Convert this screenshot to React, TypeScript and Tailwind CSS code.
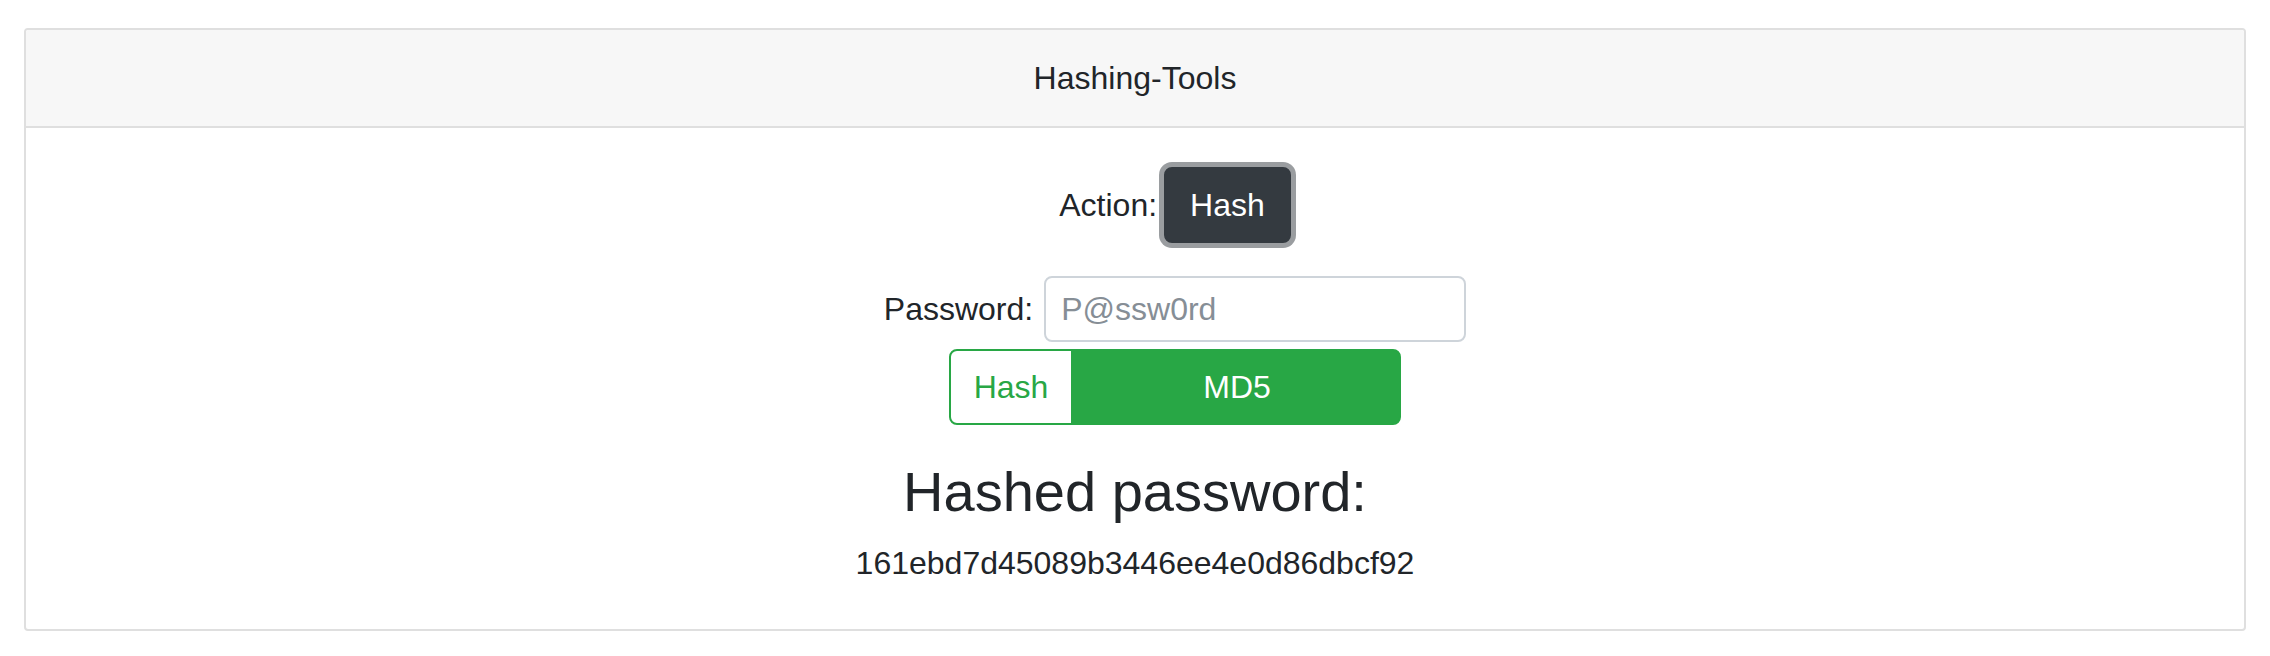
import React from 'react';

const font = { fontFamily: '"Liberation Sans", Arial, sans-serif' };

const ActionRow = () => {
  return (
    <div className="flex items-center gap-[7px]">
      <span>Action:</span>
      <button className="rounded-[8px] border-2 border-[#343a40] bg-[#343a40] px-[24px] py-[12px] leading-[48px] text-white shadow-[0_0_0_5px_#9a9da0]">
        Hash
      </button>
    </div>
  );
};

const PasswordRow = () => {
  return (
    <div className="mt-[33px] flex items-center gap-[11px]">
      <label htmlFor="pw">Password:</label>
      <input
        id="pw"
        type="text"
        placeholder="P@ssw0rd"
        className="h-[66px] w-[422px] rounded-[8px] border-2 border-[#ced4da] bg-white px-[15px] leading-[48px] text-[#495057] outline-none placeholder:text-[#868e96]"
      />
    </div>
  );
};

const HashGroup = () => {
  return (
    <div className="mt-[7px] flex">
      <button className="w-[124px] rounded-l-[8px] border-2 border-[#28a745] bg-white py-[12px] leading-[48px] text-[#28a745]">
        Hash
      </button>
      <button className="w-[328px] rounded-r-[8px] border-2 border-[#28a745] bg-[#28a745] py-[12px] leading-[48px] text-white">
        MD5
      </button>
    </div>
  );
};

export default function App() {
  return (
    <div className="min-h-screen bg-white pt-[28px] text-[32px] leading-[48px] text-[#212529]" style={font}>
      <div className="mx-[24px] overflow-hidden rounded-[4px] border-2 border-[#dfdfdf]">
        <div className="border-b-2 border-[#dfdfdf] bg-[#f7f7f7] px-[40px] py-[24px] text-center">
          Hashing-Tools
        </div>
        <div className="px-[40px] pt-[39px] pb-[42px] text-center">
          {/* controls sit a bit right of centre in the original */}
          <div className="flex flex-col items-center pl-[80px]">
            <ActionRow />
            <PasswordRow />
            <HashGroup />
          </div>
          <h3 className="mt-[33px] text-[56px] leading-[1.2] font-medium">Hashed password:</h3>
          <p className="mt-[14px]">161ebd7d45089b3446ee4e0d86dbcf92</p>
        </div>
      </div>
    </div>
  );
}
